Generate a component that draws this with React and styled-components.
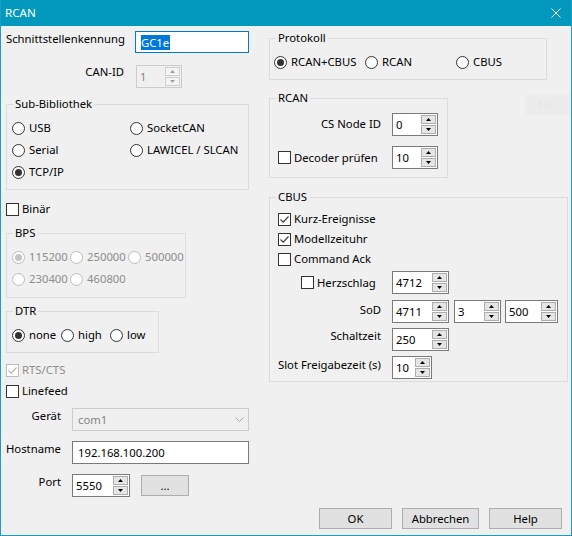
import React from 'react';
import styled, { createGlobalStyle } from 'styled-components';

const GlobalStyle = createGlobalStyle`
  html, body { margin: 0; padding: 0; background: #f0f0f0; }
  * { box-sizing: border-box; }
`;

const Window = styled.div`
  width: 572px;
  height: 536px;
  display: flex;
  flex-direction: column;
  background: #f0f0f0;
  border: 1px solid #1d9bc6;
  border-top: none;
  font-family: "Noto Sans", "Open Sans", sans-serif;
  font-size: 11.3px;
  line-height: 16px;
  color: #000;
  overflow: hidden;
`;

const TitleBar = styled.div`
  flex: none;
  height: 26px;
  margin: 0 -1px;
  padding: 0 11px 0 5px;
  background: #0399bd;
  color: #fff;
  display: flex;
  align-items: center;
  justify-content: space-between;
  font-size: 11.6px;
`;

const Body = styled.div`
  flex: 1;
  display: flex;
  padding-left: 5px;
  min-height: 0;
`;

const LeftCol = styled.div`
  width: 243px;
  flex: none;
  display: flex;
  flex-direction: column;
`;

const RightCol = styled.div`
  flex: 1;
  margin-left: 20px;
  display: flex;
  flex-direction: column;
`;

const Row = styled.div`
  flex: none;
  display: flex;
  align-items: flex-start;
  height: ${p => p.$h || 23}px;
  margin-top: ${p => p.$mt || 0}px;
`;

const Label = styled.span`
  flex: none;
  width: ${p => p.$w}px;
  margin-top: ${p => p.$dy || 0}px;
  padding-left: ${p => p.$pl || 0}px;
  text-align: ${p => (p.$right ? 'right' : 'left')};
  white-space: nowrap;
`;

const Slot = styled.div`
  flex: none;
  width: ${p => p.$w}px;
  height: 100%;
  padding-left: ${p => p.$pl || 0}px;
  display: flex;
  align-items: center;
`;

const Group = styled.div`
  flex: none;
  width: ${p => p.$w}px;
  height: ${p => p.$h}px;
  margin-top: ${p => p.$mt || 0}px;
  border: 1px solid #dcdcdc;
  display: flex;
  flex-direction: column;
`;

const Legend = styled.div`
  align-self: flex-start;
  height: 16px;
  margin: -9px 0 0 6px;
  padding: 0 2px;
  background: #f0f0f0;
`;

const OptionGrid = styled.div`
  display: grid;
  grid-template-columns: ${p => p.$cols};
  grid-auto-rows: 22px;
  margin-top: 5px;
  padding-left: ${p => p.$pl}px;
`;

const RadioItem = styled.div`
  display: flex;
  align-items: center;
  gap: 4px;
  white-space: nowrap;
  color: ${p => (p.$disabled ? '#8d8d8d' : '#000')};
`;

const Circle = styled.span`
  flex: none;
  width: 13px;
  height: 13px;
  border-radius: 50%;
  border: 1px solid ${p => (p.$disabled ? '#bcbcbc' : '#333')};
  background: #fff;
  display: flex;
  align-items: center;
  justify-content: center;
  &::after {
    content: '';
    display: ${p => (p.$on ? 'block' : 'none')};
    width: 7px;
    height: 7px;
    border-radius: 50%;
    background: ${p => (p.$disabled ? '#c4c4c4' : '#333')};
  }
`;

const CheckItem = styled.div`
  flex: none;
  display: flex;
  align-items: center;
  gap: 3px;
  height: ${p => p.$h || 16}px;
  margin-top: ${p => p.$mt || 0}px;
  padding-left: ${p => p.$pl || 0}px;
  white-space: nowrap;
  color: ${p => (p.$disabled ? '#8d8d8d' : '#000')};
`;

const Box = styled.span`
  flex: none;
  width: 13px;
  height: 13px;
  border: 1px solid ${p => (p.$disabled ? '#bcbcbc' : '#333')};
  background: #fff;
  display: flex;
  align-items: center;
  justify-content: center;
`;

const Field = styled.div`
  flex: none;
  width: ${p => p.$w}px;
  height: ${p => p.$h || 23}px;
  margin-left: ${p => p.$ml || 0}px;
  margin-top: ${p => p.$mt || 0}px;
  border: 1px solid ${p => (p.$focus ? '#0078d7' : p.$disabled ? '#cccccc' : '#7a7a7a')};
  background: ${p => (p.$disabled ? '#f0f0f0' : '#fff')};
  color: ${p => (p.$disabled ? '#838383' : '#000')};
  display: flex;
  align-items: center;
  padding-left: ${p => p.$pad ?? 5}px;
  white-space: nowrap;
`;

const Selection = styled.span`
  background: #0078d7;
  color: #fff;
  line-height: 15px;
  padding-right: 1px;
`;

const ComboText = styled.span`
  flex: 1;
  align-self: stretch;
  margin: 2px 0;
  padding-left: 4px;
  display: flex;
  align-items: center;
  background: #f0f0f0;
`;

const Chevron = styled.span`
  width: 17px;
  display: flex;
  align-items: center;
  justify-content: center;
`;

const SpinValue = styled.span`
  flex: 1;
  line-height: 21px;
`;

const SpinButtons = styled.div`
  flex: none;
  width: 17px;
  height: 100%;
  padding: 1px;
  display: flex;
  flex-direction: column;
  gap: 1px;
`;

const SpinButton = styled.div`
  flex: 1;
  border: 1px solid ${p => (p.$disabled ? '#cfcfcf' : '#adadad')};
  background: ${p => (p.$disabled ? '#f4f4f4' : '#e5e5e5')};
  display: flex;
  align-items: center;
  justify-content: center;
`;

const Button = styled.div`
  flex: none;
  width: ${p => p.$w}px;
  height: 21px;
  margin-left: ${p => p.$ml || 0}px;
  margin-top: ${p => p.$mt || 0}px;
  border: 1px solid #adadad;
  background: #e1e1e1;
  display: flex;
  align-items: center;
  justify-content: center;
`;

const Ghost = styled.div`
  flex: none;
  width: 45px;
  height: 21px;
  margin: -4px 0 0 auto;
  background: #ececec;
  color: #e6e6e6;
  padding-left: 12px;
  line-height: 21px;
  font-size: 13px;
`;

const Footer = styled.div`
  margin-top: auto;
  margin-bottom: 6px;
  padding-right: 9px;
  display: flex;
  justify-content: flex-end;
  gap: 10px;
`;

const Arrow = ({ up, color }) => (
  <svg width="5" height="3" viewBox="0 0 5 3">
    <path d={up ? 'M0 3 L2.5 0 L5 3 Z' : 'M0 0 L5 0 L2.5 3 Z'} fill={color} />
  </svg>
);

const Spinner = ({ value, w, ml, mt, disabled }) => (
  <Field $w={w} $ml={ml} $mt={mt} $disabled={disabled} $pad={3}>
    <SpinValue>{value}</SpinValue>
    <SpinButtons>
      <SpinButton $disabled={disabled}><Arrow up color={disabled ? '#a0a0a0' : '#000'} /></SpinButton>
      <SpinButton $disabled={disabled}><Arrow color={disabled ? '#a0a0a0' : '#000'} /></SpinButton>
    </SpinButtons>
  </Field>
);

const Radio = ({ children, on, disabled }) => (
  <RadioItem $disabled={disabled}>
    <Circle $on={on} $disabled={disabled} />
    {children}
  </RadioItem>
);

const Check = ({ children, on, disabled, ...rest }) => (
  <CheckItem $disabled={disabled} {...rest}>
    <Box $disabled={disabled}>
      {on && (
        <svg width="11" height="11" viewBox="0 0 11 11">
          <polyline points="1.5,5.5 4.2,8.2 9.5,2.5" fill="none" stroke={disabled ? '#b5b5b5' : '#3c3c3c'} strokeWidth="1.2" />
        </svg>
      )}
    </Box>
    {children}
  </CheckItem>
);

export default function App() {
  return (
    <>
      <GlobalStyle />
      <Window>
        <TitleBar>
          <span>RCAN</span>
          <svg width="10" height="10" viewBox="0 0 10 10">
            <path d="M0.5 0.5 L9.5 9.5 M9.5 0.5 L0.5 9.5" stroke="#fff" strokeWidth="1" />
          </svg>
        </TitleBar>
        <Body>
          <LeftCol>
            <Row $mt={5} $h={22}>
              <Label $w={129}>Schnittstellenkennung</Label>
              <Field $w={114} $h={22} $focus>
                <Selection>GC1e</Selection>
              </Field>
            </Row>
            <Row $mt={11}>
              <Label $w={118} $right>CAN-ID</Label>
              <Spinner value="1" w={46} ml={12} mt={1} disabled />
            </Row>

            <Group $w={243} $h={86} $mt={17}>
              <Legend>Sub-Bibliothek</Legend>
              <OptionGrid $cols="118px auto" $pl={5}>
                <Radio>USB</Radio>
                <Radio>SocketCAN</Radio>
                <Radio>Serial</Radio>
                <Radio>LAWICEL / SLCAN</Radio>
                <Radio on>TCP/IP</Radio>
              </OptionGrid>
            </Group>

            <Check $mt={11}>Binär</Check>

            <Group $w={180} $h={65} $mt={16}>
              <Legend>BPS</Legend>
              <OptionGrid $cols="58px 58px auto" $pl={5}>
                <Radio on disabled>115200</Radio>
                <Radio disabled>250000</Radio>
                <Radio disabled>500000</Radio>
                <Radio disabled>230400</Radio>
                <Radio disabled>460800</Radio>
              </OptionGrid>
            </Group>

            <Group $w={153} $h={42} $mt={13}>
              <Legend>DTR</Legend>
              <OptionGrid $cols="49px 49px auto" $pl={5}>
                <Radio on>none</Radio>
                <Radio>high</Radio>
                <Radio>low</Radio>
              </OptionGrid>
            </Group>

            <Check $mt={9} on disabled>RTS/CTS</Check>
            <Check $mt={5}>Linefeed</Check>

            <Row $mt={9}>
              <Label $w={55} $right>Gerät</Label>
              <Field $w={177} $ml={11} $disabled $pad={1}>
                <ComboText>com1</ComboText>
                <Chevron>
                  <svg width="9" height="5" viewBox="0 0 9 5">
                    <polyline points="0.5,0.5 4.5,4.5 8.5,0.5" fill="none" stroke="#a8a8a8" strokeWidth="1" />
                  </svg>
                </Chevron>
              </Field>
            </Row>
            <Row $mt={10}>
              <Label $w={66}>Hostname</Label>
              <Field $w={177}>192.168.100.200</Field>
            </Row>
            <Row $mt={10}>
              <Label $w={55} $right>Port</Label>
              <Spinner value="5550" w={58} ml={11} />
              <Button $w={48} $ml={11} $mt={1}>...</Button>
            </Row>
          </LeftCol>

          <RightCol>
            <Group $w={278} $h={42} $mt={12}>
              <Legend>Protokoll</Legend>
              <OptionGrid $cols="91px 91px auto" $pl={4}>
                <Radio on>RCAN+CBUS</Radio>
                <Radio>RCAN</Radio>
                <Radio>CBUS</Radio>
              </OptionGrid>
            </Group>

            <Row $mt={18} $h={80}>
              <Group $w={179} $h={80}>
                <Legend>RCAN</Legend>
                <Row $mt={7}>
                  <Label $w={111} $right $dy={3}>CS Node ID</Label>
                  <Spinner value="0" w={46} ml={11} />
                </Row>
                <Row $mt={10}>
                  <Slot $w={111} $pl={8}>
                    <Check>Decoder prüfen</Check>
                  </Slot>
                  <Spinner value="10" w={46} ml={11} />
                </Row>
              </Group>
              <Ghost>Fe</Ghost>
            </Row>

            <Group $w={299} $h={185} $mt={19}>
              <Legend>CBUS</Legend>
              <Check $mt={4} $h={20} $pl={8} on>Kurz-Ereignisse</Check>
              <Check $h={20} $pl={8} on>Modellzeituhr</Check>
              <Check $h={20} $pl={8}>Command Ack</Check>
              <Row $mt={2}>
                <Slot $w={111} $pl={31}>
                  <Check>Herzschlag</Check>
                </Slot>
                <Spinner value="4712" w={57} ml={11} />
              </Row>
              <Row $mt={6}>
                <Label $w={111} $right $dy={2}>SoD</Label>
                <Spinner value="4711" w={57} ml={11} />
                <Spinner value="3" w={47} ml={5} />
                <Spinner value="500" w={53} ml={4} />
              </Row>
              <Row $mt={5}>
                <Label $w={111} $right>Schaltzeit</Label>
                <Spinner value="250" w={57} ml={11} />
              </Row>
              <Row $mt={5}>
                <Label $w={111} $pl={8} $dy={1}>Slot Freigabezeit (s)</Label>
                <Spinner value="10" w={40} ml={11} />
              </Row>
            </Group>

            <Footer>
              <Button $w={73}>OK</Button>
              <Button $w={77}>Abbrechen</Button>
              <Button $w={73}>Help</Button>
            </Footer>
          </RightCol>
        </Body>
      </Window>
    </>
  );
}
